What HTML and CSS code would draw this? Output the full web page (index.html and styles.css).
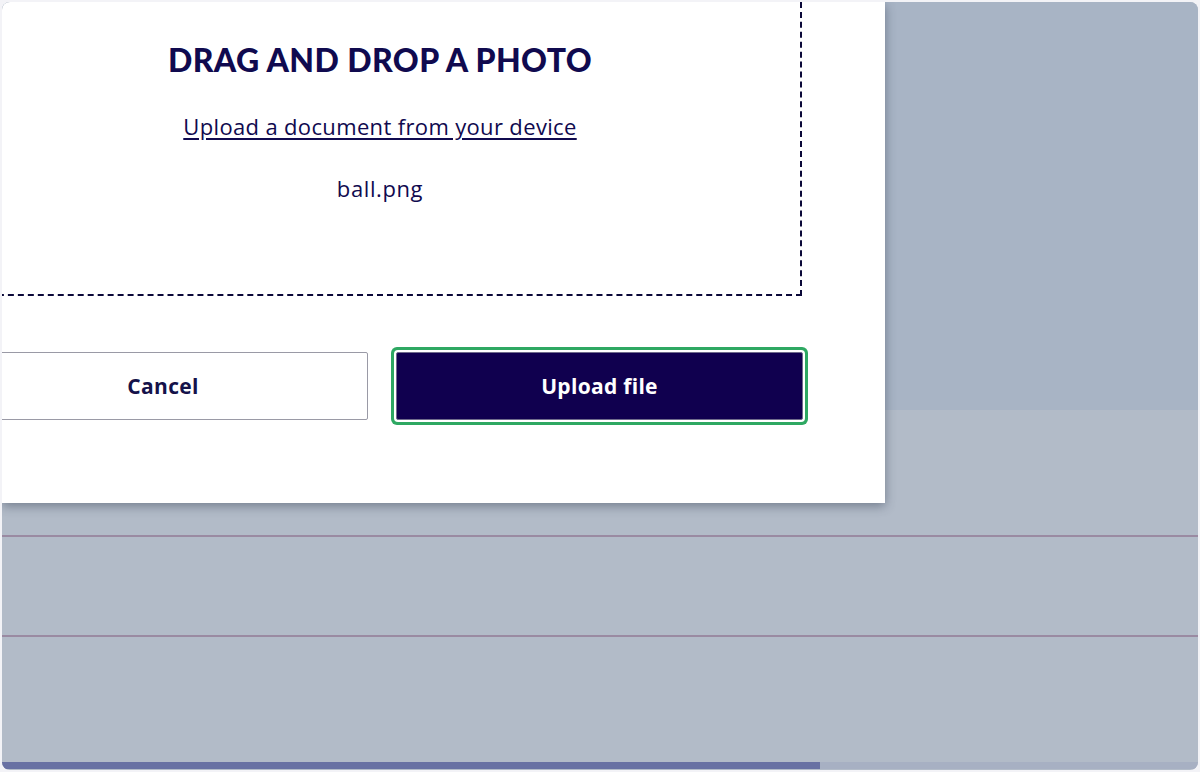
FILE: index.html
```html
<!DOCTYPE html>
<html lang="en">
<head>
  <meta charset="UTF-8" />
  <meta name="viewport" content="width=device-width, initial-scale=1.0"/>
  <title>Upload a photo</title>
  <link rel="stylesheet" href="styles.css">
</head>
<body>

<div class="screen">
  <div class="top-band"></div>
  <div class="lower-area">
    <div class="row"></div>
    <div class="row"></div>
  </div>
  <div class="progress">
    <div class="progress-fill"></div>
  </div>

  <div class="modal">
    <div class="dropzone">
      <h2 class="drop-title">DRAG AND DROP A PHOTO</h2>
      <a class="drop-link" href="#">Upload a document from your device</a>
      <div class="file-name">ball.png</div>
    </div>
    <div class="actions">
      <button class="btn btn-cancel">Cancel</button>
      <button class="btn btn-upload">Upload file</button>
    </div>
  </div>
</div>

</body>
</html>
```

FILE: styles.css
```css
body {
  margin: 0;
  background: #f3f3f7;
  font-family: "Open Sans", Lato, sans-serif;
}

.screen {
  position: relative;
  margin: 2px;
  height: 768px;
  border-radius: 8px;
  overflow: hidden;
  display: flex;
  flex-direction: column;
  background: #b2bbc8;
}

.top-band {
  height: 408px;
  background: #a8b4c5;
}

.lower-area {
  flex: 1;
  padding-top: 125px;
}

.row {
  height: 98px;
  border-top: 2px solid #9a8aa2;
}

.progress {
  height: 7px;
  margin-bottom: 1px;
  background: #a7b0c3;
}

.progress-fill {
  width: 68.4%;
  height: 100%;
  background: #6871a3;
}

.modal {
  position: absolute;
  top: 0;
  left: 0;
  width: 883px;
  height: 501px;
  box-sizing: border-box;
  padding-right: 83px;
  background: #fff;
  box-shadow: 0 3px 10px rgba(40, 50, 70, 0.45);
}

.dropzone {
  margin-left: -44px;
  padding: 38px 0 92px;
  border: 2px dashed #0a0838;
  border-top: 0;
  text-align: center;
  color: #100a4f;
}

.drop-title {
  margin: 0;
  font-family: Lato, "Open Sans", sans-serif;
  font-size: 32px;
  line-height: 40px;
  font-weight: 900;
  letter-spacing: 0.4px;
}

.drop-link {
  display: inline-block;
  margin-top: 32px;
  font-size: 22px;
  line-height: 28px;
  letter-spacing: 0.35px;
  color: #100a4f;
  text-decoration: underline;
  text-underline-offset: 3px;
}

.file-name {
  margin-top: 34px;
  font-size: 22px;
  line-height: 28px;
  letter-spacing: 0.6px;
}

.actions {
  display: grid;
  grid-template-columns: 410px 407px;
  gap: 28px;
  margin: 56px 0 0 -44px;
}

.btn {
  height: 68px;
  font-family: inherit;
  font-size: 21px;
  font-weight: 700;
  letter-spacing: 0.3px;
  border-radius: 2px;
}

.btn-cancel {
  background: #fff;
  border: 1px solid #9a9aa6;
  color: #14124a;
}

.btn-upload {
  background: #10004f;
  border: 1px solid #6f6c8c;
  color: #fff;
  box-shadow: 0 0 0 2px #fff, 0 0 0 5px #2ea862;
}
```
